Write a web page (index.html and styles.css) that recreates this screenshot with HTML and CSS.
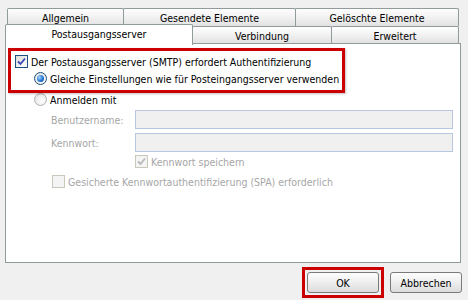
FILE: index.html
```html
<!DOCTYPE html>
<html>
<head>
<meta charset="utf-8">
<link rel="stylesheet" href="styles.css">
</head>
<body>
<div class="dialog">
  <div class="tabrow row1">
    <div class="tab t-allg">Allgemein</div>
    <div class="tab t-ges">Gesendete Elemente</div>
    <div class="tab t-gel">Gelöschte Elemente</div>
  </div>
  <div class="tabrow row2">
    <div class="tab t-post selected">Postausgangsserver</div>
    <div class="tab t-verb">Verbindung</div>
    <div class="tab t-erw">Erweitert</div>
  </div>
  <div class="panel">
    <div class="redbox">
      <div class="line l-check">
        <span class="cb checked"><svg width="9" height="9" viewBox="0 0 9 9"><path d="M1 4.5 L3.5 7 L8 1.5" fill="none" stroke="#3a48b8" stroke-width="1.8"/></svg></span>
        <span>Der Postausgangsserver (SMTP) erfordert Authentifizierung</span>
      </div>
      <div class="line l-radio">
        <span class="rb on"><span class="dot"></span></span>
        <span>Gleiche Einstellungen wie für Posteingangsserver verwenden</span>
      </div>
    </div>
    <div class="line l-anm">
      <span class="rb off"></span>
      <span>Anmelden mit</span>
    </div>
    <div class="field f1">
      <span class="lbl dis">Benutzername:</span>
      <span class="input"></span>
    </div>
    <div class="field f2">
      <span class="lbl dis">Kennwort:</span>
      <span class="input"></span>
    </div>
    <div class="line l-save dis">
      <span class="cb disabled"><svg width="9" height="9" viewBox="0 0 9 9"><path d="M1 4.5 L3.5 7 L8 1.5" fill="none" stroke="#b8b8b8" stroke-width="1.8"/></svg></span>
      <span>Kennwort speichern</span>
    </div>
    <div class="line l-spa dis">
      <span class="cb disabled"></span>
      <span>Gesicherte Kennwortauthentifizierung (SPA) erforderlich</span>
    </div>
  </div>
  <div class="buttons">
    <div class="okwrap"><div class="btn">OK</div></div>
    <div class="btn">Abbrechen</div>
  </div>
</div>
</body>
</html>
```
FILE: styles.css
```css
html, body {
  margin: 0;
  padding: 0;
  background: #f0f0f0;
}
body {
  width: 468px;
  height: 300px;
  overflow: hidden;
  font-family: "DejaVu Sans Condensed", "DejaVu Sans", sans-serif;
  font-size: 10.5px;
  color: #000;
}
.dialog {
  padding-top: 8px;
}
.tabrow {
  display: flex;
}
.row1 {
  margin-left: 7px;
  height: 18px;
}
.row2 {
  margin-left: 5px;
  height: 17px;
  position: relative;
  z-index: 2;
}
.tab {
  box-sizing: border-box;
  border: 1px solid #919b9c;
  border-bottom: none;
  border-radius: 2px 2px 0 0;
  background: linear-gradient(#fefefe, #f4f4f4 40%, #e2e2e2);
  display: flex;
  align-items: center;
  justify-content: center;
  padding-top: 1px;
}
.row1 .tab { height: 18px; }
.row1 .tab + .tab { margin-left: -1px; }
.t-allg { width: 117px; }
.t-ges { width: 173px; }
.t-gel { width: 164px; }
.row2 .tab { height: 17px; margin-left: -1px; }
.t-post.selected {
  width: 188px;
  height: 21px;
  margin-top: -2px;
  margin-left: 0;
  background: #fff;
  padding-bottom: 3px;
}
.t-verb { width: 140px; }
.t-erw { width: 128px; }
.panel {
  margin-left: 5px;
  width: 456px;
  height: 220px;
  box-sizing: border-box;
  border: 1px solid #919b9c;
  background: #fff;
  padding-top: 4px;
  padding-left: 2px;
}
.redbox {
  width: 337px;
  height: 45px;
  box-sizing: border-box;
  border: 3px solid #cc0000;
  box-shadow: 1px 1px 2px rgba(0,0,0,0.25);
  padding-top: 2px;
  position: relative;
  z-index: 1;
}
.line {
  display: flex;
  align-items: center;
  height: 17px;
  white-space: nowrap;
}
.l-check { padding-left: 4px; }
.l-radio { padding-left: 23px; }
.l-anm { padding-left: 26px; margin-top: -2px; }
.cb {
  box-sizing: border-box;
  width: 13px;
  height: 13px;
  border: 1px solid #1c5180;
  background: linear-gradient(135deg, #dcdcd6, #fff);
  margin-right: 3px;
  display: flex;
  align-items: center;
  justify-content: center;
  flex: none;
}
.cb.disabled {
  border-color: #cac8bb;
  background: #f4f4f4;
}
.rb {
  box-sizing: border-box;
  width: 13px;
  height: 13px;
  border-radius: 50%;
  border: 1px solid #1c5180;
  background: radial-gradient(circle at 65% 65%, #fff, #dcdcd6);
  margin-right: 3px;
  display: flex;
  align-items: center;
  justify-content: center;
  flex: none;
}
.rb.off {
  border-color: #b0b0b0;
  background: radial-gradient(circle at 65% 65%, #fff, #dedede);
}
.rb .dot {
  width: 7px;
  height: 7px;
  border-radius: 50%;
  background: radial-gradient(circle at 35% 35%, #9fd4ff, #1f6fd0 60%, #0a3f8f);
}
.dis { color: #a6a6a6; }
.field {
  display: flex;
  align-items: center;
  padding-left: 43px;
  height: 19px;
}
.f1 { margin-top: 2px; }
.f2 { margin-top: 4px; }
.lbl { width: 84px; flex: none; }
.input {
  box-sizing: border-box;
  width: 318px;
  height: 19px;
  border: 1px solid #b7c7df;
  background: #f0f0f0;
}
.l-save { padding-left: 127px; margin-top: 1px; }
.l-spa { padding-left: 44px; margin-top: 3px; }
.buttons {
  display: flex;
  justify-content: flex-end;
  align-items: center;
  margin-top: 4px;
  padding-right: 6px;
}
.okwrap {
  box-sizing: border-box;
  border: 3px solid #cc0000;
  padding: 2px;
  margin-right: 6px;
}
.btn {
  box-sizing: border-box;
  width: 72px;
  height: 21px;
  border: 1px solid #7a7a7a;
  border-radius: 3px;
  background: linear-gradient(#fdfdfd, #eeeeee 50%, #dcdcdc);
  display: flex;
  align-items: center;
  justify-content: center;
}
```
